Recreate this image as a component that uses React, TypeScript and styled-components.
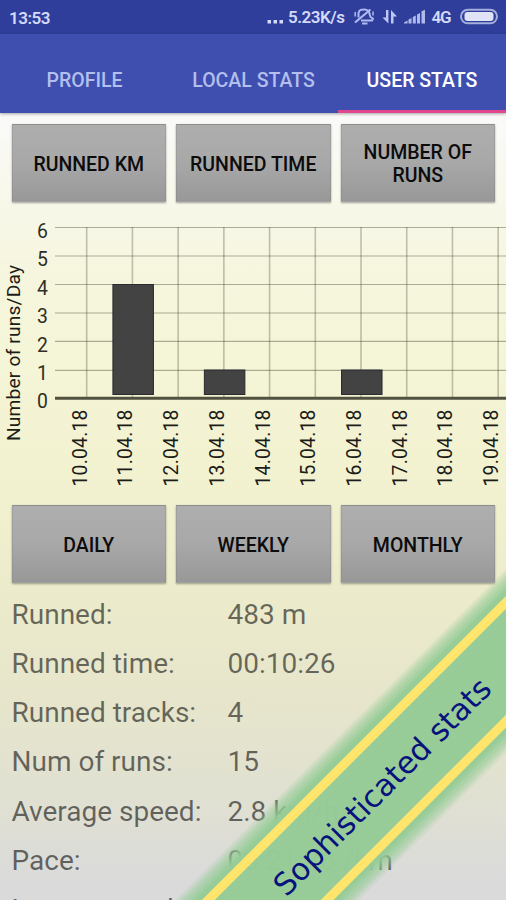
import React from 'react';
import styled, { createGlobalStyle } from 'styled-components';

const GlobalStyle = createGlobalStyle`
  * { box-sizing: border-box; }
  body { margin: 0; font-family: Roboto, "Liberation Sans", sans-serif; }
`;

const Screen = styled.div`
  position: relative;
  width: 506px;
  height: 900px;
  overflow: hidden;
  display: flex;
  flex-direction: column;
  background: linear-gradient(#fafafa 112px, #f8f8ec 190px, #f6f6df 270px, #f5f5d8 350px, #f2f2d0 480px, #ecebcb 590px, #e6e5cc 710px, #e0e0d2 800px, #dadadb 885px);
`;

const StatusBar = styled.header`
  height: 34px;
  flex: none;
  display: flex;
  align-items: center;
  justify-content: space-between;
  padding: 2px 8px 0 9px;
  background: #2f3e9b;
  color: #d3dafa;
  font-size: 17px;
  font-weight: 600;
`;

const Clock = styled.span`
  letter-spacing: -0.5px;
`;

const StatusIcons = styled.svg`
  display: block;
  margin-top: -2px;
`;

const TabBar = styled.nav`
  height: 79px;
  flex: none;
  display: grid;
  grid-template-columns: 169px 169px 168px;
  background: #3f4fb0;
  box-shadow: 0 1px 3px rgba(0, 0, 0, 0.35);
`;

const Tab = styled.button<{ $active?: boolean }>`
  border: 0;
  border-bottom: 3px solid ${(p) => (p.$active ? '#e0478c' : 'transparent')};
  background: none;
  padding: 17px 0 0;
  font: 500 19.5px Roboto, sans-serif;
  color: ${(p) => (p.$active ? '#ffffff' : '#b3bfec')};
  white-space: nowrap;
`;

const ButtonRow = styled.div<{ $top: number }>`
  display: grid;
  grid-template-columns: repeat(3, 154.5px);
  column-gap: 10px;
  height: 78px;
  flex: none;
  margin: ${(p) => p.$top}px 0 0 11.5px;
`;

const StatButton = styled.button`
  border: 1px solid rgba(110, 110, 110, 0.2);
  padding: 2px 12px 0;
  background: linear-gradient(#aeaeae, #a8a8a8 50%, #989898);
  box-shadow: 0 1px 2px rgba(0, 0, 0, 0.35);
  font: 500 19.5px/23px Roboto, sans-serif;
  color: #0c0c0c;
  white-space: pre-line;
`;

const Chart = styled.svg`
  display: block;
  flex: none;
  width: 506px;
  height: 290px;
  margin-top: 5px;
  font-family: Roboto, sans-serif;
`;

const StatList = styled.dl`
  margin: 7px 0 0;
  flex: none;
`;

const StatRow = styled.div`
  display: grid;
  grid-template-columns: 216px 1fr;
  height: 49.25px;
  align-items: center;
  padding-left: 11.5px;
  font-size: 28px;
  line-height: 32px;
  color: rgba(0, 0, 0, 0.56);
  white-space: nowrap;
`;

const StatLabel = styled.dt`
  margin: 0;
`;

const StatValue = styled.dd`
  margin: 0;
`;

const Ribbon = styled.div`
  position: absolute;
  left: -18px;
  top: 747px;
  width: 740px;
  height: 136px;
  display: flex;
  align-items: center;
  transform: rotate(-45deg);
  background: linear-gradient(
    rgba(150, 204, 151, 0) 2px,
    rgba(150, 204, 151, 0.55) 9px,
    rgba(150, 204, 151, 0.98) 18px,
    rgba(150, 204, 151, 0.98) 118px,
    rgba(150, 204, 151, 0.55) 127px,
    rgba(150, 204, 151, 0) 134px
  );
`;

const RibbonBand = styled.div`
  width: 100%;
  height: 93px;
  border: solid #ffe56c;
  border-width: 9px 0;
  display: flex;
  align-items: center;
  justify-content: center;
  padding: 2px 0 0 83px;
`;

const RibbonText = styled.span`
  font: 30.7px "DejaVu Sans", sans-serif;
  color: #07127c;
  white-space: nowrap;
`;

const COLUMN = 45.72;
const FIRST = 86.7;
const TOP = 207;
const days = ['10', '11', '12', '13', '14', '15', '16', '17', '18', '19'];
const rules = [227.5, 256, 284.5, 313, 341.3, 370.3];
const bars = [
  { day: 1, top: 284 },
  { day: 3, top: 369.5 },
  { day: 6, top: 369.5 },
];

function RunsChart() {
  return (
    <Chart viewBox={`0 ${TOP} 506 290`}>
      {rules.map((y) => (
        <line key={y} x1="55" x2="506" y1={y} y2={y} stroke="#3c3c28" strokeOpacity=".4" strokeWidth="1.2" />
      ))}
      {days.map((d, i) => (
        <line key={d} x1={FIRST + i * COLUMN} x2={FIRST + i * COLUMN} y1="227" y2="397" stroke="#3c3c28" strokeOpacity=".3" strokeWidth="1.6" />
      ))}
      <line x1="55" x2="506" y1="398.2" y2="398.2" stroke="#51513f" strokeWidth="3" />
      {bars.map((b) => (
        <rect key={b.day} x={FIRST + b.day * COLUMN - 19.5} y={b.top + 0.5} width="40.5" height={394 - b.top} fill="#434343" stroke="#29292f" strokeWidth="1" />
      ))}
      {[6, 5, 4, 3, 2, 1, 0].map((n) => (
        <text key={n} x="42.5" y={408.3 - n * 28.4} fontSize="19.4" textAnchor="middle" fill="#2e2e27">{n}</text>
      ))}
      {days.map((d, i) => (
        <text key={d} transform={`translate(${FIRST + i * COLUMN} 486.5) rotate(-90)`} fontSize="19.4" textLength="77" fill="#1c1c18">{`${d}.04.18`}</text>
      ))}
      <text transform="translate(20.3 441) rotate(-90)" fontSize="19.2" textLength="176" fill="#1c1c18">Number of runs/Day</text>
    </Chart>
  );
}

const stats = [
  ['Runned:', '483 m'],
  ['Runned time:', '00:10:26'],
  ['Runned tracks:', '4'],
  ['Num of runs:', '15'],
  ['Average speed:', '2.8 km/h'],
  ['Pace:', '00:21:36 /km'],
  ['Longest track:', ''],
];

export default function App() {
  return (
    <>
      <GlobalStyle />
      <Screen>
        <StatusBar>
          <Clock>13:53</Clock>
          <StatusIcons width="234" height="28" viewBox="264 4 234 28" fill="#d3dafa">
            <rect x="267.5" y="21" width="3.5" height="3.5" />
            <rect x="273.5" y="21" width="3.5" height="3.5" />
            <rect x="279.5" y="21" width="3.5" height="3.5" />
            <text x="288" y="24" fontSize="17" fontWeight="600" textLength="57">5.23K/s</text>
            <g fill="none" stroke="#aebaf0" strokeWidth="2" strokeLinejoin="round">
              <path d="M358.5 18.5v-4.5c1-3.5 3-3.5 6-3.5 3 0 5 2 5 4.5l1 3 2.5 1.5-1 2h-11M362 24.5h5.5" />
              <path d="M355 23.5L370.5 10.5" strokeWidth="2.2" />
              <path d="M355.2 13v4.5M373 12.5v4" strokeWidth="1.5" />
            </g>
            <path d="M382.5 18.5h3.5V11h2.4v13.5zM391 24.5V11l6 6.5h-3.5v7z" fill="#bcc7f4" />
            <path d="M404 24.5h3.5V21.5l-3.5 2zM408.5 24.5h3v-5.5l-3 1.5zM412.8 24.5h3V16.5l-3 1.5zM417 24.5h3v-10.5l-3 1.5zM421.5 24.5h3.5V10.8l-3.5 1.5z" fill="#b0baea" />
            <text x="431.5" y="24" fontSize="17" fontWeight="600" textLength="20">4G</text>
            <rect x="461" y="10.8" width="36" height="13.5" rx="6.7" fill="none" stroke="#a5aedd" strokeWidth="2" />
            <rect x="464.5" y="13" width="29" height="9" rx="3" fill="#e0e3f5" />
          </StatusIcons>
        </StatusBar>
        <TabBar>
          <Tab>PROFILE</Tab>
          <Tab>LOCAL STATS</Tab>
          <Tab $active>USER STATS</Tab>
        </TabBar>
        <ButtonRow $top={11}>
          <StatButton>RUNNED KM</StatButton>
          <StatButton>RUNNED TIME</StatButton>
          <StatButton>{'NUMBER OF\nRUNS'}</StatButton>
        </ButtonRow>
        <RunsChart />
        <ButtonRow $top={8}>
          <StatButton>DAILY</StatButton>
          <StatButton>WEEKLY</StatButton>
          <StatButton>MONTHLY</StatButton>
        </ButtonRow>
        <StatList>
          {stats.map(([label, value]) => (
            <StatRow key={label}>
              <StatLabel>{label}</StatLabel>
              <StatValue>{value}</StatValue>
            </StatRow>
          ))}
        </StatList>
        <Ribbon>
          <RibbonBand>
            <RibbonText>Sophisticated stats</RibbonText>
          </RibbonBand>
        </Ribbon>
      </Screen>
    </>
  );
}
